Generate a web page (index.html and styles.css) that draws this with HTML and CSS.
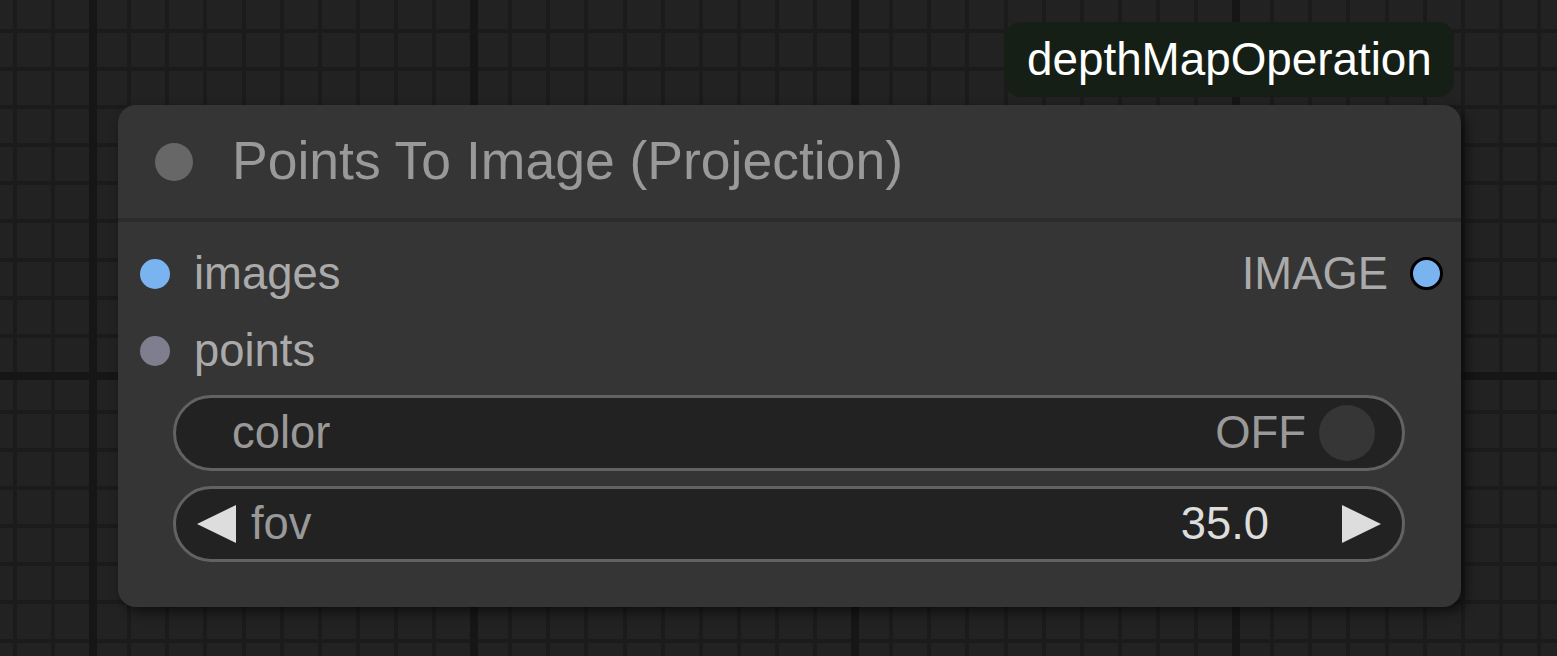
FILE: index.html
```html
<!DOCTYPE html>
<html>
<head>
<meta charset="utf-8">
<link rel="stylesheet" href="styles.css">
</head>
<body>
<div class="canvas">
  <div class="group-badge">depthMapOperation</div>
  <div class="node">
    <div class="node-title">
      <span class="title-dot"></span>
      <span class="title-text">Points To Image (Projection)</span>
    </div>
    <div class="node-body">
      <div class="slot-row">
        <div class="slot-in">
          <span class="dot dot-image"></span>
          <span class="slot-label">images</span>
        </div>
        <div class="slot-out">
          <span class="slot-label">IMAGE</span>
          <span class="dot dot-out"></span>
        </div>
      </div>
      <div class="slot-row">
        <div class="slot-in">
          <span class="dot dot-points"></span>
          <span class="slot-label">points</span>
        </div>
      </div>
      <div class="widgets">
        <div class="widget widget-toggle">
          <span class="w-label">color</span>
          <span class="w-spacer"></span>
          <span class="w-off">OFF</span>
          <span class="toggle-knob"></span>
        </div>
        <div class="widget widget-number">
          <svg class="arrow" width="39" height="38" viewBox="0 0 39 38"><polygon points="39,0 39,38 0,19" fill="#dddddd"/></svg>
          <span class="w-label fov">fov</span>
          <span class="w-spacer"></span>
          <span class="w-value">35.0</span>
          <svg class="arrow arrow-right" width="39" height="38" viewBox="0 0 39 38"><polygon points="0,0 0,38 39,19" fill="#dddddd"/></svg>
        </div>
      </div>
    </div>
  </div>
</div>
</body>
</html>
```
FILE: styles.css
```css
html, body {
  margin: 0;
  padding: 0;
  width: 1557px;
  height: 656px;
  overflow: hidden;
}
body {
  font-family: "Liberation Sans", Arial, sans-serif;
  background-color: #222222;
}
.canvas {
  position: relative;
  width: 1557px;
  height: 656px;
  background-color: #222222;
  background-image:
    repeating-linear-gradient(90deg, transparent 0 89px, #161616 89px 97px, transparent 97px 381px),
    repeating-linear-gradient(180deg, transparent 0 372px, #161616 372px 380px, transparent 380px 381px),
    repeating-linear-gradient(90deg, transparent 0 13px, #1b1b1b 13px 17px, transparent 17px 38.1px),
    repeating-linear-gradient(180deg, transparent 0 29px, #1b1b1b 29px 33px, transparent 33px 38.1px);
}
.group-badge {
  position: absolute;
  left: 1005px;
  top: 22px;
  width: 449px;
  height: 75px;
  box-sizing: border-box;
  padding-left: 22px;
  display: flex;
  align-items: center;
  background: #151f15;
  border-radius: 16px;
  color: #ffffff;
  font-size: 45.8px;
}
.node {
  position: absolute;
  left: 118px;
  top: 105px;
  width: 1343px;
  height: 502px;
  background: #353535;
  border-radius: 18px;
  box-shadow: 5px 5px 12px rgba(0, 0, 0, 0.55);
  display: flex;
  flex-direction: column;
}
.node-title {
  height: 113px;
  border-bottom: 4px solid #2b2b2b;
  display: flex;
  align-items: center;
  padding-left: 37px;
  gap: 39px;
}
.title-dot {
  width: 38px;
  height: 38px;
  border-radius: 50%;
  background: #676767;
  flex: none;
}
.title-text {
  color: #999999;
  font-size: 53.5px;
  line-height: 1;
  padding-bottom: 2px;
}
.node-body {
  padding-top: 13px;
  display: flex;
  flex-direction: column;
}
.slot-row {
  height: 77px;
  display: flex;
  align-items: center;
  justify-content: space-between;
  padding-left: 22px;
  padding-right: 18px;
}
.slot-in, .slot-out {
  display: flex;
  align-items: center;
}
.slot-in { gap: 24px; }
.slot-out { gap: 22px; }
.dot {
  width: 30px;
  height: 30px;
  border-radius: 50%;
  flex: none;
}
.dot-image { background: #7ab4f0; }
.dot-points { background: #7e7e8f; }
.dot-out {
  width: 27px;
  height: 27px;
  background: #7ab4f0;
  border: 3px solid #000000;
}
.slot-label {
  color: #aaaaaa;
  font-size: 45.4px;
  line-height: 1;
}
.widgets {
  margin-top: 6px;
  display: flex;
  flex-direction: column;
  gap: 15px;
  padding-left: 55px;
  padding-right: 56px;
}
.widget {
  height: 76px;
  box-sizing: border-box;
  border: 3px solid #626262;
  border-radius: 38px;
  background: #222222;
  display: flex;
  align-items: center;
  font-size: 45.4px;
  line-height: 1;
}
.widget-toggle {
  padding-left: 56px;
  padding-right: 27px;
}
.widget-number {
  padding-left: 21px;
  padding-right: 21px;
}
.w-label { color: #999999; }
.w-label.fov { margin-left: 15px; }
.w-spacer { flex: 1; }
.w-off { color: #999999; }
.toggle-knob {
  width: 56px;
  height: 56px;
  border-radius: 50%;
  background: #363636;
  margin-left: 13px;
  flex: none;
}
.w-value {
  color: #dddddd;
  margin-right: 73px;
}
.arrow { flex: none; display: block; }
```
